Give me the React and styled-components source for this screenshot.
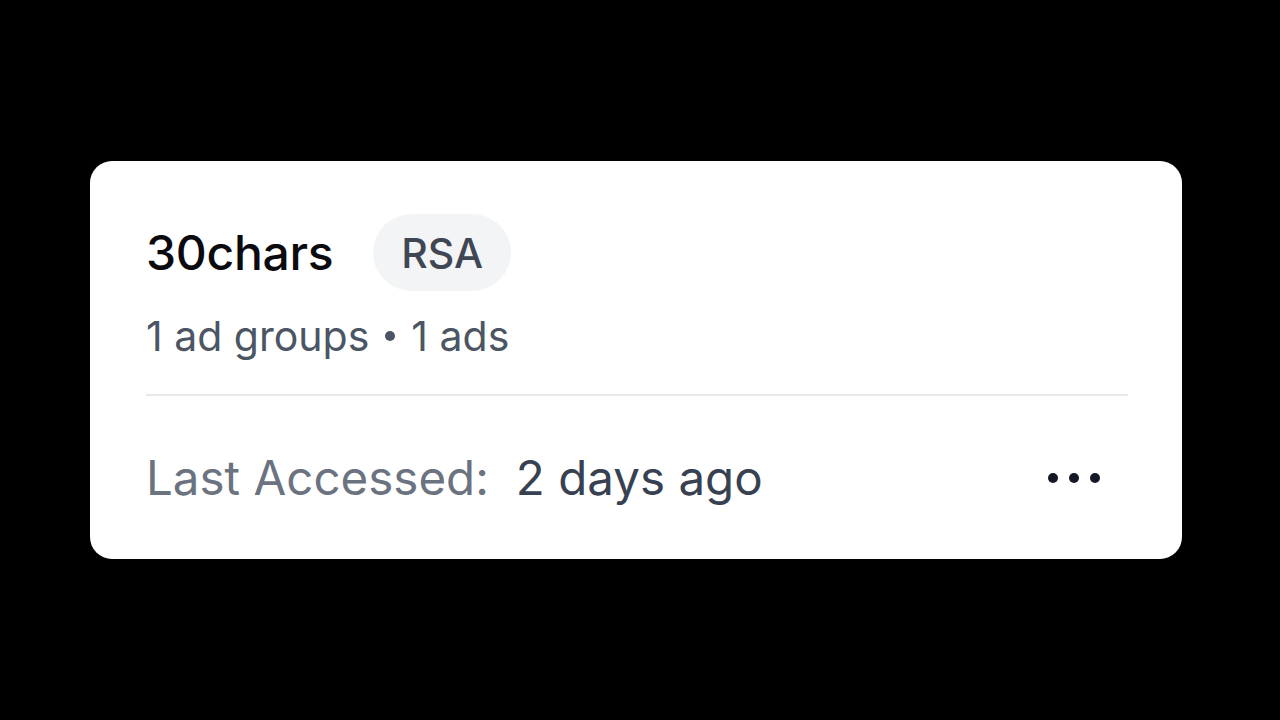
import React from 'react';
import styled, { createGlobalStyle } from 'styled-components';

const GlobalStyle = createGlobalStyle`
  html, body {
    margin: 0;
    padding: 0;
    background: #000;
    font-family: Inter, "Noto Sans", sans-serif;
  }
`;

const Page = styled.div`
  width: 1280px;
  height: 720px;
  display: flex;
  align-items: center;
  justify-content: center;
  padding-right: 8px;
  box-sizing: border-box;
`;

const Card = styled.div`
  width: 1092px;
  height: 398px;
  background: #fff;
  border-radius: 22px;
  box-sizing: border-box;
  padding: 53px 54px 0 56px;
  display: flex;
  flex-direction: column;
`;

const TitleRow = styled.div`
  display: flex;
  align-items: center;
  gap: 40px;
  height: 77px;
`;

const Title = styled.h2`
  margin: 0;
  font-size: 48px;
  font-weight: 500;
  color: #0b0b0f;
  letter-spacing: -0.3px;
`;

const Pill = styled.span`
  display: inline-flex;
  align-items: center;
  justify-content: center;
  height: 77px;
  padding: 0 28px;
  border-radius: 999px;
  background: #f3f4f6;
  color: #3f4654;
  font-size: 41px;
  font-weight: 500;
`;

const Meta = styled.div`
  margin-top: 20px;
  font-size: 41px;
  color: #4b5563;
  display: flex;
  align-items: center;
  gap: 16px;
`;

const Dot = styled.span`
  width: 10px;
  height: 10px;
  border-radius: 50%;
  background: #4b5563;
`;

const Divider = styled.hr`
  margin: 33px 0 0;
  border: none;
  border-top: 2px solid #e8e9ec;
`;

const Footer = styled.div`
  flex: 1;
  display: flex;
  align-items: center;
  justify-content: space-between;
`;

const Accessed = styled.div`
  font-size: 47.5px;
  color: #6b7280;
  display: flex;
  gap: 27px;
`;

const When = styled.span`
  color: #374151;
`;

const MoreButton = styled.button`
  border: none;
  background: none;
  padding: 0;
  margin-right: 27px;
  display: flex;
  align-items: center;
  cursor: pointer;
`;

function MoreIcon() {
  return (
    <svg width="54" height="12" viewBox="0 0 54 12">
      <circle cx="6" cy="6" r="5" fill="#151827" />
      <circle cx="27" cy="6" r="5" fill="#151827" />
      <circle cx="48" cy="6" r="5" fill="#151827" />
    </svg>
  );
}

export default function App() {
  return (
    <>
      <GlobalStyle />
      <Page>
        <Card>
          <TitleRow>
            <Title>30chars</Title>
            <Pill>RSA</Pill>
          </TitleRow>
          <Meta>
            <span>1 ad groups</span>
            <Dot />
            <span>1 ads</span>
          </Meta>
          <Divider />
          <Footer>
            <Accessed>
              <span>Last Accessed:</span>
              <When>2 days ago</When>
            </Accessed>
            <MoreButton aria-label="More actions">
              <MoreIcon />
            </MoreButton>
          </Footer>
        </Card>
      </Page>
    </>
  );
}
